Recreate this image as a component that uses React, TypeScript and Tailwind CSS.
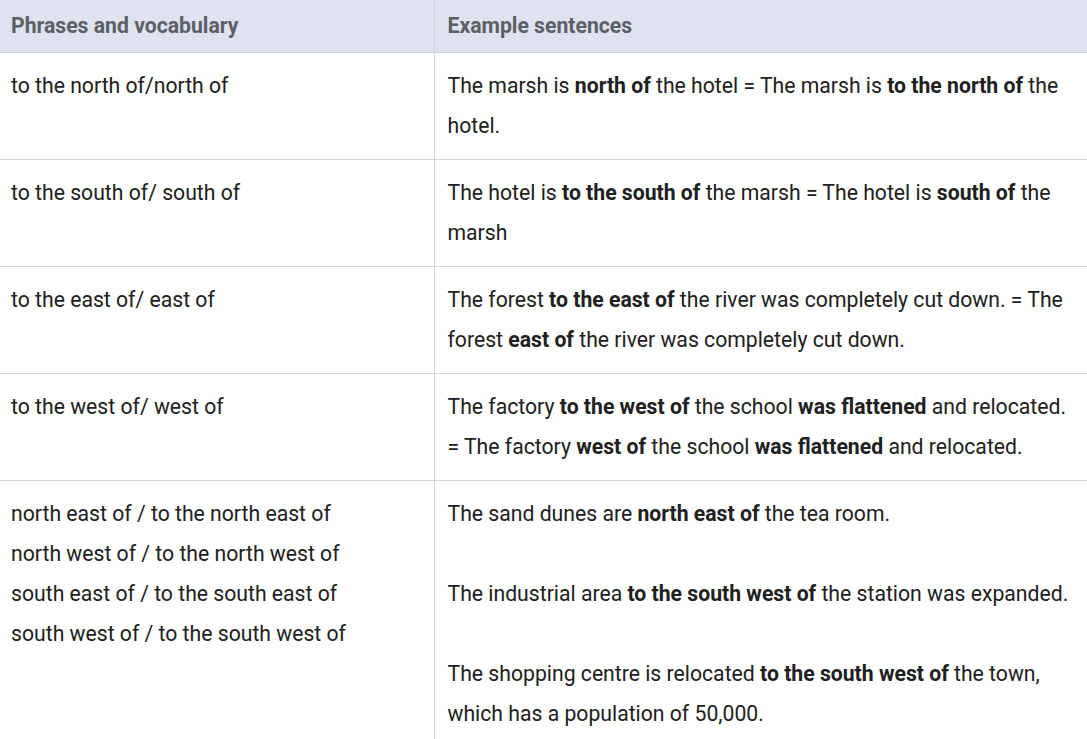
import React from 'react';

type Row = {
  phrase: React.ReactNode;
  example: React.ReactNode;
};

const rows: Row[] = [
  {
    phrase: 'to the north of/north of',
    example: (
      <p>
        The marsh is <b>north of</b> the hotel = The marsh is <b>to the north of</b> the hotel.
      </p>
    ),
  },
  {
    phrase: 'to the south of/ south of',
    example: (
      <p>
        The hotel is <b>to the south of</b> the marsh = The hotel is <b>south of</b> the marsh
      </p>
    ),
  },
  {
    phrase: 'to the east of/ east of',
    example: (
      <p>
        The forest <b>to the east of</b> the river was completely cut down. = The forest <b>east of</b> the
        river was completely cut down.
      </p>
    ),
  },
  {
    phrase: 'to the west of/ west of',
    example: (
      <p>
        The factory <b>to the west of</b> the school <b>was flattened</b> and relocated. = The factory{' '}
        <b>west of</b> the school <b>was flattened</b> and relocated.
      </p>
    ),
  },
  {
    phrase: (
      <>
        <p>north east of / to the north east of</p>
        <p>north west of / to the north west of</p>
        <p>south east of / to the south east of</p>
        <p>south west of / to the south west of</p>
      </>
    ),
    example: (
      <div className="flex flex-col gap-[40px]">
        <p>
          The sand dunes are <b>north east of</b> the tea room.
        </p>
        <p>
          The industrial area <b>to the south west of</b> the station was expanded.
        </p>
        <p>
          The shopping centre is relocated <b>to the south west of</b> the town, which has a population of
          50,000.
        </p>
      </div>
    ),
  },
];

const App: React.FC = () => {
  return (
    <div className="w-[1087px] h-[739px] overflow-hidden bg-white font-['Roboto',sans-serif] text-[21.2px] text-[#202020]">
      <table className="w-[1087px] table-fixed border-collapse">
        <colgroup>
          <col className="w-[434px]" />
          <col />
        </colgroup>
        <thead>
          <tr className="h-[52px] bg-[#dfe3ef] border-b border-[#c9cdd8]">
            <th className="px-[11px] text-left font-bold text-[#5b5f66] border-r border-[#cfd2da]">
              Phrases and vocabulary
            </th>
            <th className="px-[13px] text-left font-bold text-[#5b5f66]">Example sentences</th>
          </tr>
        </thead>
        <tbody>
          {rows.map((row, i) => (
            <tr key={i} className="border-b border-[#d6d6d6] align-top leading-[40px]">
              <td className="h-[106px] px-[11px] pt-[13px] pb-[13px] border-r border-[#d6d6d6]">{row.phrase}</td>
              <td className="h-[106px] pl-[13px] pr-[8px] pt-[13px] pb-[13px]">{row.example}</td>
            </tr>
          ))}
        </tbody>
      </table>
    </div>
  );
};

export default App;
